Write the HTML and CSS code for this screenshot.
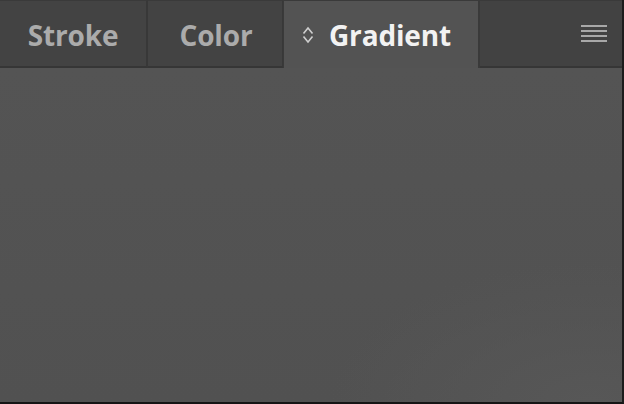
FILE: index.html
```html
<!DOCTYPE html>
<html>
<head>
<meta charset="utf-8">
<link rel="stylesheet" href="styles.css">
</head>
<body>
<div class="panel">
  <div class="tabbar">
    <div class="tab tab-stroke">Stroke</div>
    <div class="tab tab-color">Color</div>
    <div class="tab tab-gradient active">
      <svg class="chev" width="12" height="18" viewBox="0 0 12 18">
        <path d="M1.5 7.5 L6 2 L10.5 7.5" fill="none" stroke="#cfcfcf" stroke-width="1.6"/>
        <path d="M1.5 10.5 L6 16 L10.5 10.5" fill="none" stroke="#cfcfcf" stroke-width="1.6"/>
      </svg>
      <span>Gradient</span>
    </div>
    <div class="tab-fill">
      <div class="menu">
        <span></span><span></span><span></span><span></span>
      </div>
    </div>
  </div>
  <div class="content"></div>
</div>
</body>
</html>
```
FILE: styles.css
```css
html, body {
  margin: 0;
  padding: 0;
  background: #111;
}
.panel {
  width: 622px;
  height: 402px;
  display: flex;
  flex-direction: column;
  background: #535353;
  border-right: 2px solid #1c1c1c;
  border-bottom: 2px solid #151515;
  font-family: "Open Sans", "DejaVu Sans", sans-serif;
}
.tabbar {
  height: 68px;
  display: flex;
  flex-shrink: 0;
}
.tab {
  box-sizing: border-box;
  height: 68px;
  display: flex;
  align-items: center;
  justify-content: center;
  font-weight: 700;
  font-size: 28px;
  letter-spacing: -0.15px;
  color: #ababab;
  background: #434343;
  border-top: 1px solid #3a3a3a;
  border-bottom: 2px solid #363636;
  border-right: 2px solid #383838;
  padding-top: 3px;
}
.tab-stroke {
  width: 148px;
  padding-left: 0;
}
.tab-color {
  width: 136px;
  padding-left: 2px;
}
.tab-gradient {
  width: 197px;
  background: #535353;
  color: #f2f2f2;
  border-bottom: none;
  border-left: 1px solid #3a3a3a;
  border-right: 2px solid #3a3a3a;
  margin-left: -1px;
  padding-left: 0;
  padding-right: 9px;
  padding-top: 1px;
  gap: 15px;
}
.chev {
  display: block;
}
.tab-fill {
  flex: 1;
  box-sizing: border-box;
  height: 68px;
  background: #424242;
  border-top: 1px solid #3a3a3a;
  border-bottom: 2px solid #363636;
  display: flex;
  align-items: center;
  justify-content: flex-end;
  padding-right: 15px;
}
.menu {
  display: flex;
  flex-direction: column;
  gap: 3px;
  margin-top: -1px;
}
.menu span {
  display: block;
  width: 26px;
  height: 2px;
  background: #a8a8a8;
}
.content {
  flex: 1;
  background: radial-gradient(ellipse 260px 140px at 95% 100%, #575757 0%, rgba(83,83,83,0) 100%), linear-gradient(#545454, #515151);
}
```
